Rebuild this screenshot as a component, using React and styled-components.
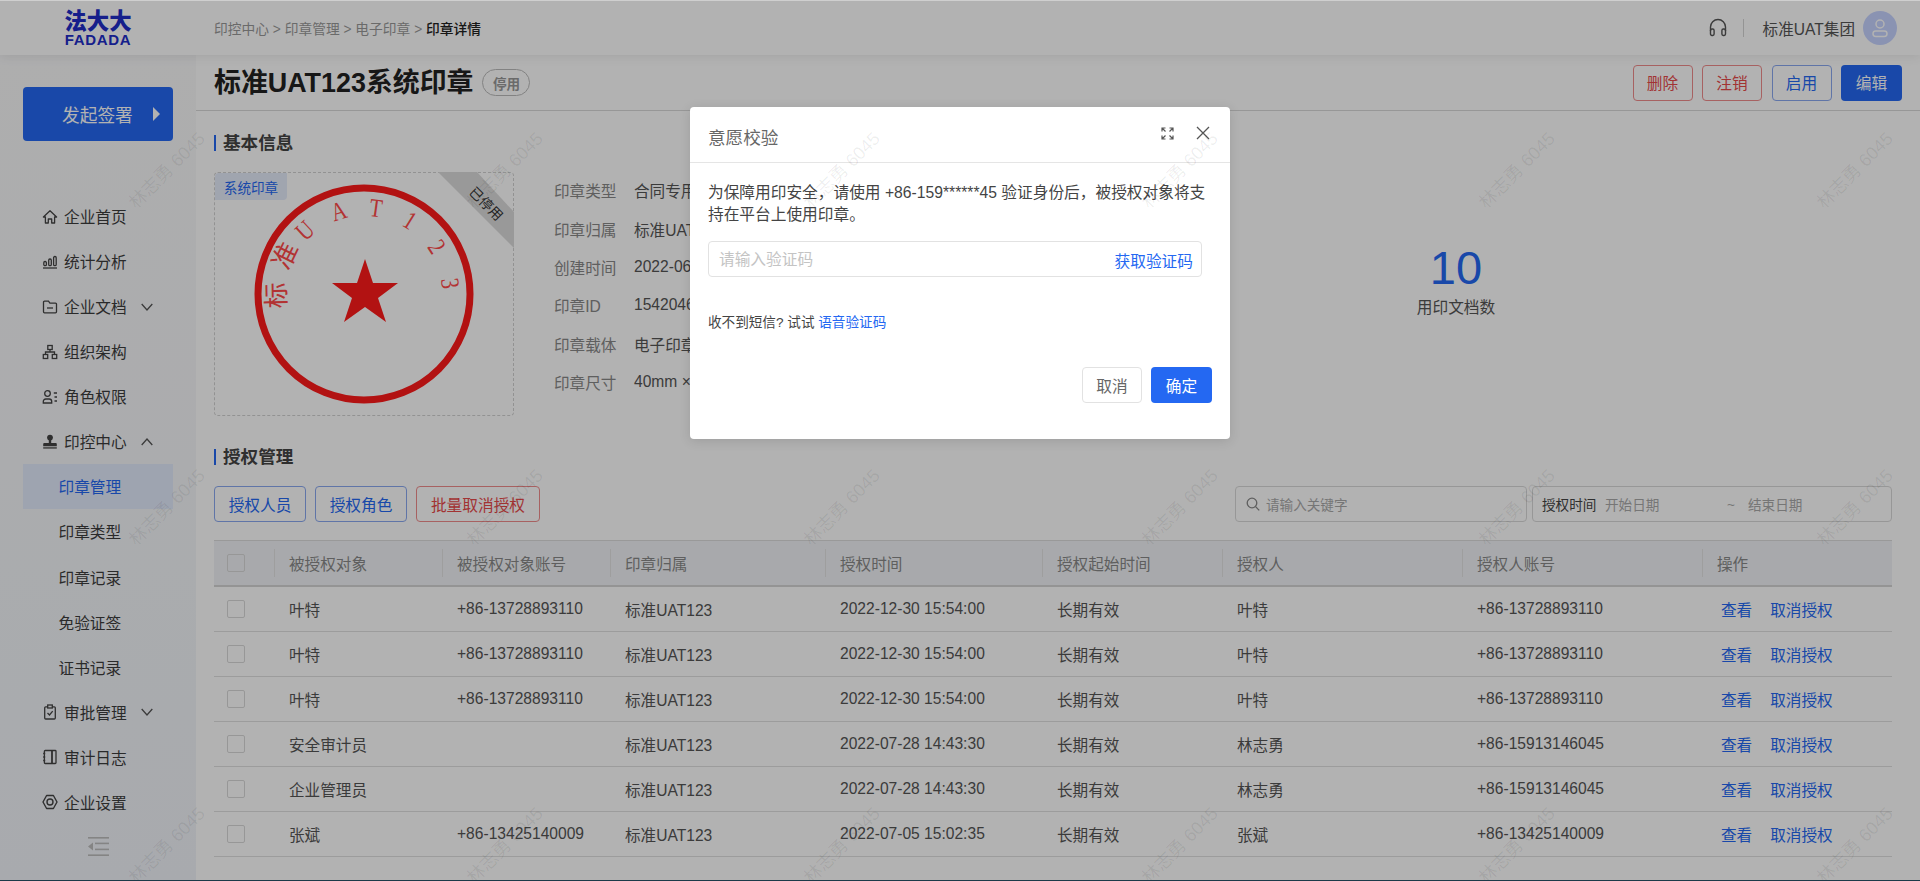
import React from 'react';
import styled, { createGlobalStyle } from 'styled-components';

const FONT = '"Liberation Sans", "Noto Sans CJK SC", sans-serif';
const BLUE = '#2468f2';
const RED = '#e84a4a';
const COLUMNS = '60px 168px 168px 215px 217px 180px 240px 240px 190px';

const GlobalStyle = createGlobalStyle`
    html, body {
        margin: 0;
        padding: 0;
        height: 100%;
        overflow: hidden;
        font-family: ${FONT};
        color: #333;
        background: #fff;
    }
    * {
        box-sizing: border-box;
    }
`;

const Shell = styled.div`
    position: relative;
    width: 1920px;
    height: 881px;
    overflow: hidden;
    display: flex;
    flex-direction: column;
    background: #fff;
    border-top: 1px solid #cfcfcf;
    border-bottom: 1px solid #1d3a49;
`;

const Header = styled.header`
    position: relative;
    z-index: 2;
    flex: none;
    height: 54px;
    display: flex;
    align-items: center;
    background: #fff;
    box-shadow: 0 2px 10px rgba(0, 0, 0, 0.08);
`;

const LogoBox = styled.div`
    width: 196px;
    flex: none;
    display: flex;
    flex-direction: column;
    align-items: center;
    color: #202dc8;
    font-weight: 700;
`;

const LogoCn = styled.span`
    font-size: 22.4px;
    line-height: 22px;
    font-weight: 900;
`;

const LogoEn = styled.span`
    font-size: 15px;
    line-height: 13px;
    letter-spacing: 0.7px;
`;

const Crumbs = styled.nav`
    margin-left: 18px;
    font-size: 13.75px;
    color: #999;
    white-space: pre;
`;

const CrumbNow = styled.span`
    color: #222;
    font-weight: 500;
`;

const HeaderRight = styled.div`
    margin-left: auto;
    padding-right: 23px;
    display: flex;
    align-items: center;
    color: #555;
`;

const HeaderDivider = styled.span`
    width: 1px;
    height: 18px;
    margin: 0 19px 0 16px;
    background: #d5d5d5;
`;

const CompanyName = styled.span`
    font-size: 15.6px;
    margin-right: 8px;
`;

const Avatar = styled.span`
    width: 34px;
    height: 34px;
    border-radius: 50%;
    background: #c6d3ff;
    color: #fff;
    display: flex;
    align-items: center;
    justify-content: center;
`;

const Body = styled.div`
    flex: 1;
    display: flex;
    min-height: 0;
`;

const Sidebar = styled.aside`
    width: 196px;
    flex: none;
    padding-top: 32px;
    background: linear-gradient(180deg, #f9f9fa 0%, #f1f4fa 100%);
`;

const SignButton = styled.button`
    display: flex;
    align-items: center;
    width: 150px;
    height: 54px;
    margin: 0 0 53px 23px;
    padding: 0 0 0 39px;
    border: 0;
    border-radius: 4px;
    background: ${BLUE};
    color: #fff;
    font: 400 17.7px ${FONT};
`;

const SignArrow = styled.span`
    margin-left: 20px;
    width: 0;
    height: 0;
    border-style: solid;
    border-width: 7px 0 7px 7px;
    border-color: transparent transparent transparent #fff;
`;

const NavItem = styled.div`
    display: flex;
    align-items: center;
    height: 45.07px;
    margin: 0 23px;
    padding-left: ${(p) => (p.$child ? '35.5px' : '18px')};
    font-size: 15.7px;
    color: ${(p) => (p.$active ? BLUE : '#3d3d3d')};
    background: ${(p) => (p.$active ? '#e3ebfc' : 'transparent')};
`;

const NavIcon = styled.span`
    width: 17px;
    height: 17px;
    margin-right: 6px;
    display: flex;
    align-items: center;
    justify-content: center;
    color: #444;
`;

const NavChevron = styled.svg`
    width: 12px;
    height: 8px;
    margin-left: 14px;
    color: #555;
    transform: ${(p) => (p.$up ? 'rotate(180deg)' : 'none')};
`;

const CollapseRow = styled.div`
    display: flex;
    justify-content: center;
    padding-top: 12px;
    color: #bdbdbd;
`;

const Main = styled.main`
    flex: 1;
    min-width: 0;
`;

const TitleBar = styled.div`
    height: 56px;
    padding: 0 18px;
    display: flex;
    align-items: center;
    border-bottom: 1px solid #d9d9d9;
`;

const PageTitle = styled.h1`
    margin: 0;
    font-size: 26.9px;
    line-height: 36px;
    font-weight: 700;
    color: #222;
`;

const StatusPill = styled.span`
    width: 48px;
    height: 27px;
    margin-left: 9px;
    border: 1px solid #bbb;
    border-radius: 14px;
    display: flex;
    align-items: center;
    justify-content: center;
    font-size: 13.6px;
    font-weight: 700;
    color: #999;
`;

const TitleActions = styled.div`
    margin-left: auto;
    display: flex;
    gap: 9.5px;
`;

const OutlineButton = styled.button`
    height: 36px;
    width: ${(p) => p.$w}px;
    padding: 0;
    border: 1px solid ${(p) => (p.$red ? '#f08c8c' : '#8aa8f0')};
    border-radius: 4px;
    background: #fff;
    color: ${(p) => (p.$red ? RED : BLUE)};
    font: 400 15.7px ${FONT};
`;

const SolidButton = styled.button`
    height: 36px;
    width: 61px;
    padding: 0;
    border: 0;
    border-radius: 4px;
    background: ${BLUE};
    color: #fff;
    font: 400 15.7px ${FONT};
`;

const Content = styled.div`
    padding: 23px 28px 0 18px;
`;

const SectionTitle = styled.h2`
    margin: ${(p) => p.$top || 0}px 0 20px;
    height: 18px;
    padding-left: 9px;
    position: relative;
    font-size: 17.6px;
    line-height: 18px;
    font-weight: 700;
    color: #444;

    &::before {
        content: '';
        position: absolute;
        left: 0;
        top: 1px;
        width: 2px;
        height: 16px;
        background: ${BLUE};
    }
`;

const BasicRow = styled.div`
    display: flex;
    height: 244px;
`;

const SealBox = styled.div`
    position: relative;
    width: 300px;
    height: 244px;
    flex: none;
    display: flex;
    align-items: center;
    justify-content: center;
    border: 1px dashed #d2d2d2;
    border-radius: 4px;
`;

const SealTag = styled.span`
    position: absolute;
    left: 0;
    top: 0;
    width: 72px;
    height: 27px;
    display: flex;
    align-items: center;
    justify-content: center;
    border-radius: 4px 0 4px 0;
    background: #e6ecfb;
    color: ${BLUE};
    font-size: 13.6px;
`;

const Ribbon = styled.div`
    position: absolute;
    right: -1px;
    top: -1px;
    width: 76px;
    height: 76px;
    background: #dcdcdc;
    clip-path: polygon(0 0, 39px 0, 76px 40px, 76px 76px);
`;

const RibbonText = styled.span`
    position: absolute;
    left: 49px;
    top: 31px;
    transform: translate(-50%, -50%) rotate(45deg);
    font-size: 13.6px;
    white-space: nowrap;
    color: #333;
`;

const InfoList = styled.dl`
    width: 500px;
    flex: none;
    margin: -1px 0 0 40px;
`;

const InfoRow = styled.div`
    display: flex;
    align-items: center;
    height: 38.4px;
    font-size: 15.6px;
`;

const InfoLabel = styled.dt`
    width: 80px;
    flex: none;
    color: #888;
`;

const InfoValue = styled.dd`
    margin: 0;
    color: #555;
`;

const StatBlock = styled.div`
    width: 200px;
    flex: none;
    margin: 71px 0 0 302px;
    display: flex;
    flex-direction: column;
    align-items: center;
`;

const StatNumber = styled.span`
    font-size: 47px;
    line-height: 50px;
    color: ${BLUE};
`;

const StatLabel = styled.span`
    margin-top: 3px;
    font-size: 15.7px;
    line-height: 24px;
    color: #555;
`;

const Toolbar = styled.div`
    height: 36px;
    display: flex;
    align-items: center;
    gap: 9px;
`;

const Filters = styled.div`
    margin-left: auto;
    display: flex;
    gap: 5px;
`;

const SearchBox = styled.div`
    width: 292px;
    height: 36px;
    padding-left: 10px;
    display: flex;
    align-items: center;
    gap: 6px;
    border: 1px solid #d9d9d9;
    border-radius: 4px;
    color: #aaa;
    font-size: 13.6px;
`;

const DateBox = styled.div`
    width: 360px;
    height: 36px;
    padding-left: 9px;
    display: flex;
    align-items: center;
    border: 1px solid #d9d9d9;
    border-radius: 4px;
    font-size: 13.6px;
    color: #aaa;
`;

const DateLabel = styled.span`
    width: 63px;
    color: #444;
`;

const DateField = styled.span`
    width: ${(p) => p.$w}px;
`;

const Table = styled.div`
    margin-top: 18px;
    border-top: 1px solid #dcdcdc;
`;

const HeadRow = styled.div`
    display: grid;
    grid-template-columns: ${COLUMNS};
    height: 46px;
    align-items: center;
    background: #f1f3f7;
    border-bottom: 2px solid #d5d5d5;
    font-size: 15.6px;
    color: #888;
`;

const Row = styled.div`
    display: grid;
    grid-template-columns: ${COLUMNS};
    height: 45px;
    padding-bottom: 1px;
    align-items: center;
    border-bottom: 1px solid #e0e0e0;
    font-size: 15.6px;
    color: #555;
`;

const HeadCell = styled.div`
    position: relative;
    padding-left: 15px;

    &::before {
        content: '';
        position: absolute;
        left: 0;
        top: -3px;
        bottom: -3px;
        width: 1px;
        background: #e2e2e2;
    }
`;

const Cell = styled.div`
    padding-left: 15px;
    white-space: nowrap;
`;

const CheckCell = styled.div`
    padding-left: 13px;
    display: flex;
`;

const Check = styled.span`
    width: 18px;
    height: 18px;
    border: 1px solid #d9d9d9;
    border-radius: 2px;
    background: #fff;
`;

const HeadCheck = styled(Check)`
    background: #f1f3f7;
`;

const OpCell = styled(Cell)`
    padding-left: 19px;
    display: flex;
    gap: 18px;
    color: ${BLUE};
`;

const Overlay = styled.div`
    position: absolute;
    inset: 0;
    z-index: 10;
    display: flex;
    justify-content: center;
    align-items: flex-start;
    padding-top: 106px;
    background: rgba(0, 0, 0, 0.3);
`;

const Modal = styled.div`
    width: 540px;
    height: 332px;
    display: flex;
    flex-direction: column;
    border-radius: 4px;
    background: #fff;
    box-shadow: 0 2px 12px rgba(0, 0, 0, 0.12);
`;

const ModalHead = styled.div`
    flex: none;
    height: 56px;
    padding: 4px 20px 0 18px;
    display: flex;
    align-items: center;
    border-bottom: 1px solid #e5e5e5;
    font-size: 17.6px;
    color: #666;
`;

const ModalTools = styled.div`
    margin-left: auto;
    margin-top: -7px;
    display: flex;
    align-items: center;
    gap: 22px;
    color: #555;
`;

const ModalBody = styled.div`
    flex: 1;
    padding: 19px 18px 0;
    display: flex;
    flex-direction: column;
`;

const ModalText = styled.p`
    margin: 0;
    font-size: 15.7px;
    line-height: 22px;
    width: 506px;
    color: #444;
`;

const CodeInput = styled.div`
    width: 494px;
    height: 36px;
    margin-top: 15px;
    padding: 0 8px 2px 10px;
    display: flex;
    align-items: center;
    justify-content: space-between;
    border: 1px solid #e2e2e2;
    border-radius: 4px;
    font-size: 15.7px;
    color: #c4c4c4;
`;

const CodeLink = styled.span`
    position: relative;
    top: 2px;
    color: ${BLUE};
`;

const VoiceHint = styled.div`
    margin-top: 36px;
    font-size: 13.6px;
    line-height: 20px;
    color: #444;
`;

const VoiceLink = styled.span`
    color: ${BLUE};
`;

const ModalFoot = styled.div`
    margin: 34px 0 0;
    display: flex;
    justify-content: flex-end;
    gap: 9px;
`;

const CancelButton = styled.button`
    width: 60px;
    height: 36px;
    padding: 0;
    border: 1px solid #e2e2e2;
    border-radius: 4px;
    background: #fff;
    color: #666;
    font: 400 15.7px ${FONT};
`;

const OkButton = styled(SolidButton)`
    background: ${BLUE};
`;

const Watermarks = styled.div`
    position: absolute;
    left: -3px;
    top: -1px;
    z-index: 20;
    display: grid;
    grid-template-columns: repeat(6, 337.5px);
    grid-auto-rows: 337.5px;
    pointer-events: none;
`;

const Mark = styled.div`
    display: flex;
    align-items: center;
    justify-content: center;
    font-size: 18px;
    white-space: nowrap;
    color: rgba(0, 0, 0, 0.07);

    span {
        transform: rotate(-45deg);
    }
`;

const Svg = ({ size = 16, children, ...rest }) => (
    <svg
        width={size}
        height={size}
        viewBox="0 0 16 16"
        fill="none"
        stroke="currentColor"
        strokeWidth="1.3"
        {...rest}
    >
        {children}
    </svg>
);

const icons = {
    home: (
        <Svg>
            <path d="M8 1.8 14.6 8h-2v6H9.7v-4H6.3v4H3.4V8h-2z" strokeLinejoin="round" />
        </Svg>
    ),
    chart: (
        <Svg>
            <rect x="1.8" y="7.5" width="2.6" height="4.2" rx="1.2" />
            <rect x="6.7" y="5" width="2.6" height="6.7" rx="1.2" />
            <rect x="11.6" y="2.5" width="2.6" height="9.2" rx="1.2" />
            <path d="M1 14h14" />
        </Svg>
    ),
    folder: (
        <Svg>
            <path d="M1.5 3.2a1 1 0 0 1 1-1h4l1.4 1.9h5.6a1 1 0 0 1 1 1v7.7a1 1 0 0 1-1 1h-11a1 1 0 0 1-1-1z" />
            <path d="M5 9h6" />
        </Svg>
    ),
    org: (
        <Svg>
            <rect x="5.8" y="1.5" width="4.4" height="4" />
            <rect x="1.3" y="10.5" width="4.4" height="4" />
            <rect x="10.3" y="10.5" width="4.4" height="4" />
            <path d="M8 5.5V8M3.5 10.5V8h9v2.5" />
        </Svg>
    ),
    role: (
        <Svg>
            <circle cx="5.5" cy="4.5" r="2.8" />
            <path d="M1.3 14v-1.5a2.5 2.5 0 0 1 2.5-2.5h3.4a2.5 2.5 0 0 1 2.5 2.5V14z" />
            <path d="M11.8 4H15M12.5 8H15M12.5 12H15" />
        </Svg>
    ),
    stamp: (
        <Svg stroke="none" fill="currentColor">
            <circle cx="8" cy="3.6" r="2.9" />
            <path d="M6.8 5.5h2.4v3.6h4.6a1 1 0 0 1 1 1v2.1H1.2v-2.1a1 1 0 0 1 1-1h4.6z" />
            <rect x="1.2" y="13" width="13.6" height="1.8" fill="#777" />
        </Svg>
    ),
    approve: (
        <Svg>
            <rect x="2.7" y="2.8" width="10.6" height="12.2" rx="1" />
            <rect x="5.7" y="1" width="4.6" height="3" fill="#f2f4f8" />
            <path d="m5.5 9 2 2 3.2-3.8" />
        </Svg>
    ),
    book: (
        <Svg>
            <rect x="2.4" y="1.5" width="11.6" height="13" rx="0.8" />
            <path d="M10 1.5v13" strokeWidth="1.8" />
            <path d="M1.2 4.5h2M1.2 8h2M1.2 11.5h2" />
        </Svg>
    ),
    settings: (
        <Svg strokeWidth="1.4">
            <path d="M4.6 1.5h6.8L15 8l-3.6 6.5H4.6L1 8z" strokeLinejoin="round" />
            <circle cx="8" cy="8" r="3" />
        </Svg>
    ),
};

const Chevron = ({ up }) => (
    <NavChevron $up={up} viewBox="0 0 12 8" fill="none" stroke="currentColor" strokeWidth="1.3">
        <path d="M.7 1 6 7l5.3-6" />
    </NavChevron>
);

const navItems = [
    { label: '企业首页', icon: 'home' },
    { label: '统计分析', icon: 'chart' },
    { label: '企业文档', icon: 'folder', chevron: 'down' },
    { label: '组织架构', icon: 'org' },
    { label: '角色权限', icon: 'role' },
    { label: '印控中心', icon: 'stamp', chevron: 'up' },
    { label: '印章管理', child: true, active: true },
    { label: '印章类型', child: true },
    { label: '印章记录', child: true },
    { label: '免验证签', child: true },
    { label: '证书记录', child: true },
    { label: '审批管理', icon: 'approve', chevron: 'down' },
    { label: '审计日志', icon: 'book' },
    { label: '企业设置', icon: 'settings' },
];

const infoItems = [
    ['印章类型', '合同专用'],
    ['印章归属', '标准UAT123'],
    ['创建时间', '2022-06-30 15:54:00'],
    ['印章ID', '1542046123456789'],
    ['印章载体', '电子印章'],
    ['印章尺寸', '40mm × 40mm'],
];

const headers = ['被授权对象', '被授权对象账号', '印章归属', '授权时间', '授权起始时间', '授权人', '授权人账号', '操作'];

const rows = [
    ['叶特', '+86-13728893110', '2022-12-30 15:54:00', '叶特', '+86-13728893110'],
    ['叶特', '+86-13728893110', '2022-12-30 15:54:00', '叶特', '+86-13728893110'],
    ['叶特', '+86-13728893110', '2022-12-30 15:54:00', '叶特', '+86-13728893110'],
    ['安全审计员', '', '2022-07-28 14:43:30', '林志勇', '+86-15913146045'],
    ['企业管理员', '', '2022-07-28 14:43:30', '林志勇', '+86-15913146045'],
    ['张斌', '+86-13425140009', '2022-07-05 15:02:35', '张斌', '+86-13425140009'],
];

// letters round the seal: [char, angle from top, size, horizontal squeeze]
const sealLetters = [
    ['标', -91, 26, 1],
    ['准', -64, 26, 1],
    ['U', -43, 26, 0.8],
    ['A', -17, 26, 0.8],
    ['T', 8, 26, 0.8],
    ['1', 32, 26, 0.8],
    ['2', 57, 26, 0.8],
    ['3', 83, 26, 0.8],
];

const Seal = () => (
    <svg width="224" height="224" viewBox="-112 -112 224 224">
        <circle cx="0" cy="0" r="106" fill="none" stroke="#ff1a1a" strokeWidth="7" />
        <polygon
            points="1,-35 9,-11 34,-11 14,4 22,28 1,13 -20,28 -12,4 -32,-11 -7,-11"
            fill="#ff1a1a"
        />
        {sealLetters.map(([ch, angle, size, squeeze]) => (
            <text
                key={ch}
                transform={`rotate(${angle}) translate(0 -87) scale(${squeeze} 1)`}
                textAnchor="middle"
                dominantBaseline="central"
                fontFamily='"Liberation Serif", "Noto Sans CJK SC", serif'
                fontSize={size}
                fill="#ff4a4a"
            >
                {ch}
            </text>
        ))}
    </svg>
);

export default function App() {
    return (
        <Shell>
            <GlobalStyle />
            <Header>
                <LogoBox>
                    <LogoCn>法大大</LogoCn>
                    <LogoEn>FADADA</LogoEn>
                </LogoBox>
                <Crumbs>
                    {'印控中心 > 印章管理 > 电子印章 > '}
                    <CrumbNow>印章详情</CrumbNow>
                </Crumbs>
                <HeaderRight>
                    <svg width="18" height="20" viewBox="0 0 18 20" fill="none" stroke="currentColor" strokeWidth="1.4">
                        <path d="M1.5 13V9a7.5 7.5 0 0 1 15 0v4" />
                        <rect x="1.5" y="11" width="3.6" height="6.5" rx="1.4" />
                        <rect x="12.9" y="11" width="3.6" height="6.5" rx="1.4" />
                    </svg>
                    <HeaderDivider />
                    <CompanyName>标准UAT集团</CompanyName>
                    <Avatar>
                        <svg width="18" height="20" viewBox="0 0 18 20" fill="none" stroke="currentColor" strokeWidth="1.5">
                            <circle cx="9" cy="6" r="4" />
                            <rect x="2" y="13" width="14" height="5.5" rx="2.7" />
                        </svg>
                    </Avatar>
                </HeaderRight>
            </Header>
            <Body>
                <Sidebar>
                    <SignButton>
                        发起签署
                        <SignArrow />
                    </SignButton>
                    {navItems.map((item) => (
                        <NavItem key={item.label} $child={item.child} $active={item.active}>
                            {item.icon && <NavIcon>{icons[item.icon]}</NavIcon>}
                            {item.label}
                            {item.chevron && <Chevron up={item.chevron === 'up'} />}
                        </NavItem>
                    ))}
                    <CollapseRow>
                        <svg width="21" height="19" viewBox="0 0 21 19" fill="currentColor">
                            <rect width="21" height="1.6" />
                            <rect x="7" y="5.6" width="14" height="1.6" />
                            <rect x="7" y="11.6" width="14" height="1.6" />
                            <rect y="17.4" width="21" height="1.6" />
                            <path d="M5 5.5v8L0 9.5z" />
                        </svg>
                    </CollapseRow>
                </Sidebar>
                <Main>
                    <TitleBar>
                        <PageTitle>标准UAT123系统印章</PageTitle>
                        <StatusPill>停用</StatusPill>
                        <TitleActions>
                            <OutlineButton $red $w={60}>删除</OutlineButton>
                            <OutlineButton $red $w={60}>注销</OutlineButton>
                            <OutlineButton $w={60}>启用</OutlineButton>
                            <SolidButton>编辑</SolidButton>
                        </TitleActions>
                    </TitleBar>
                    <Content>
                        <SectionTitle>基本信息</SectionTitle>
                        <BasicRow>
                            <SealBox>
                                <SealTag>系统印章</SealTag>
                                <Ribbon>
                                    <RibbonText>已停用</RibbonText>
                                </Ribbon>
                                <Seal />
                            </SealBox>
                            <InfoList>
                                {infoItems.map(([label, value]) => (
                                    <InfoRow key={label}>
                                        <InfoLabel>{label}</InfoLabel>
                                        <InfoValue>{value}</InfoValue>
                                    </InfoRow>
                                ))}
                            </InfoList>
                            <StatBlock>
                                <StatNumber>10</StatNumber>
                                <StatLabel>用印文档数</StatLabel>
                            </StatBlock>
                        </BasicRow>
                        <SectionTitle $top={32}>授权管理</SectionTitle>
                        <Toolbar>
                            <OutlineButton $w={92}>授权人员</OutlineButton>
                            <OutlineButton $w={92}>授权角色</OutlineButton>
                            <OutlineButton $red $w={124}>批量取消授权</OutlineButton>
                            <Filters>
                                <SearchBox>
                                    <svg width="14" height="14" viewBox="0 0 14 14" fill="none" stroke="#888" strokeWidth="1.3">
                                        <circle cx="6" cy="6" r="4.8" />
                                        <path d="m9.6 9.6 3.6 3.8" />
                                    </svg>
                                    请输入关键字
                                </SearchBox>
                                <DateBox>
                                    <DateLabel>授权时间</DateLabel>
                                    <DateField $w={122}>开始日期</DateField>
                                    <DateField $w={21}>~</DateField>
                                    <DateField $w={100}>结束日期</DateField>
                                </DateBox>
                            </Filters>
                        </Toolbar>
                        <Table>
                            <HeadRow>
                                <CheckCell>
                                    <HeadCheck />
                                </CheckCell>
                                {headers.map((h) => (
                                    <HeadCell key={h}>{h}</HeadCell>
                                ))}
                            </HeadRow>
                            {rows.map((row, i) => (
                                <Row key={i}>
                                    <CheckCell>
                                        <Check />
                                    </CheckCell>
                                    <Cell>{row[0]}</Cell>
                                    <Cell>{row[1]}</Cell>
                                    <Cell>标准UAT123</Cell>
                                    <Cell>{row[2]}</Cell>
                                    <Cell>长期有效</Cell>
                                    <Cell>{row[3]}</Cell>
                                    <Cell>{row[4]}</Cell>
                                    <OpCell>
                                        <span>查看</span>
                                        <span>取消授权</span>
                                    </OpCell>
                                </Row>
                            ))}
                        </Table>
                    </Content>
                </Main>
            </Body>
            <Overlay>
                <Modal>
                    <ModalHead>
                        意愿校验
                        <ModalTools>
                            <svg width="13" height="13" viewBox="0 0 13 13" fill="none" stroke="currentColor" strokeWidth="1.2">
                                <path d="M1 4.5V1h3.5M1 1l3.5 3.5M12 4.5V1H8.5M12 1 8.5 4.5M1 8.5V12h3.5M1 12l3.5-3.5M12 8.5V12H8.5M12 12 8.5 8.5" />
                            </svg>
                            <svg width="14" height="14" viewBox="0 0 14 14" fill="none" stroke="currentColor" strokeWidth="1.3">
                                <path d="m1 1 12 12M13 1 1 13" />
                            </svg>
                        </ModalTools>
                    </ModalHead>
                    <ModalBody>
                        <ModalText>
                            为保障用印安全，请使用 +86-159******45 验证身份后，被授权对象将支持在平台上使用印章。
                        </ModalText>
                        <CodeInput>
                            请输入验证码
                            <CodeLink>获取验证码</CodeLink>
                        </CodeInput>
                        <VoiceHint>
                            收不到短信? 试试 <VoiceLink>语音验证码</VoiceLink>
                        </VoiceHint>
                        <ModalFoot>
                            <CancelButton>取消</CancelButton>
                            <OkButton>确定</OkButton>
                        </ModalFoot>
                    </ModalBody>
                </Modal>
            </Overlay>
            <Watermarks>
                {Array.from({ length: 18 }, (_, i) => (
                    <Mark key={i}>
                        <span>林志勇 6045</span>
                    </Mark>
                ))}
            </Watermarks>
        </Shell>
    );
}
